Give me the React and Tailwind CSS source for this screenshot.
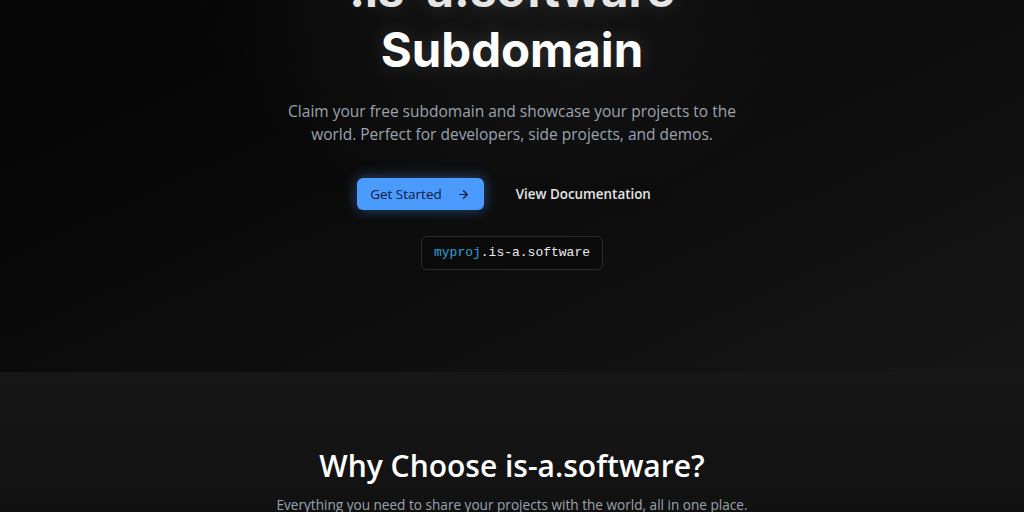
import { ArrowRight } from "lucide-react";

export default function App() {
  return (
    <div className="min-h-screen bg-[#0a0a0a] overflow-hidden" style={{ fontFamily: "'Open Sans', 'Noto Sans', sans-serif" }}>
      <div className="-mt-[100px]">
        {/* Hero */}
        <section className="relative bg-gradient-to-br from-[#030303] via-[#0b0b0b] to-[#161616] pb-[102px]">
          <div className="absolute inset-0 bg-[radial-gradient(ellipse_at_50%_12%,rgba(255,255,255,0.06),transparent_45%)]" />
          <div className="relative flex flex-col items-center text-center">
            <h1 className="font-['Inter',sans-serif] text-[47.4px] leading-[60px] font-bold text-white [text-shadow:0_0_20px_rgba(255,255,255,0.15)]">
              Get Your Own
              <br />
              <span className="text-[#e5e5e5]">.is-a.software</span>
              <br />
              Subdomain
            </h1>
            <p className="mt-[20px] w-[470px] text-[15.5px] leading-[23px] text-[#9ca3af]">
              Claim your free subdomain and showcase your projects to the world. Perfect for developers, side projects, and demos.
            </p>
            <div className="mt-[32px] flex items-center gap-4">
              <button className="flex h-8 items-center gap-[15px] rounded-md bg-[#4b9bff] pl-[13px] pr-[14px] text-[13.5px] font-medium text-[#0c1a33] shadow-[0_0_14px_rgba(75,155,255,0.45)]">
                Get Started
                <ArrowRight size={13} strokeWidth={2.2} />
              </button>
              <button className="h-8 rounded-md bg-[#0d0d0d]/60 px-4 text-[13.4px] font-semibold text-[#e5e5e5]">
                View Documentation
              </button>
            </div>
            <div className="mt-[26px] rounded-md border border-[#2b2b2b] bg-[#0b0b0b] px-3 py-2 font-['Liberation_Mono',monospace] text-[13px] leading-[16px] text-[#ececec]">
              <span className="text-[#2aa3dc]">myproj</span>.is-a.software
            </div>
          </div>
        </section>

        {/* Features intro */}
        <section className="bg-gradient-to-b from-[#171717] to-[#0d0d0d] pt-[76px] pb-24">
          <div className="flex flex-col items-center text-center">
            <h2 className="text-[30px] leading-[36px] font-semibold text-white">
              Why Choose is-a.software?
            </h2>
            <p className="mt-[10px] text-[13.6px] leading-[22px] text-[#9ca3af]">
              Everything you need to share your projects with the world, all in one place.
            </p>
          </div>
        </section>
      </div>
    </div>
  );
}
